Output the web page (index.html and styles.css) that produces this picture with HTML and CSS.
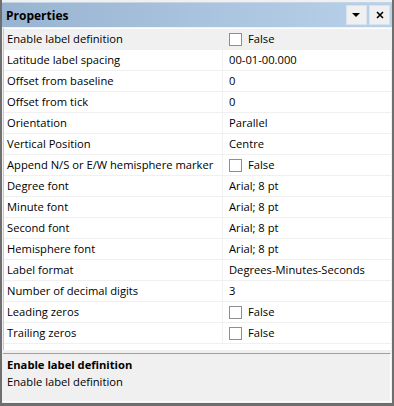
FILE: index.html
```html
<!DOCTYPE html>
<html lang="en">
<head>
  <meta charset="UTF-8">
  <title>Properties</title>
  <link rel="stylesheet" href="styles.css">
</head>
<body>
  <div class="panel">
    <div class="title-bar">
      <span class="title">Properties</span>
      <div class="title-buttons">
        <button class="tb-btn">
          <svg width="9" height="5" viewBox="0 0 9 5"><path d="M0 0H8L4 4Z" fill="#000"/></svg>
        </button>
        <button class="tb-btn">
          <svg width="8" height="8" viewBox="0 0 8 8"><path d="M1 1L7 7M7 1L1 7" stroke="#000" stroke-width="1.6"/></svg>
        </button>
      </div>
    </div>
    <div class="grid">
      <div class="row selected">
        <div class="name">Enable label definition</div>
        <div class="value"><span class="check"></span>False</div>
      </div>
      <div class="row">
        <div class="name">Latitude label spacing</div>
        <div class="value">00-01-00.000</div>
      </div>
      <div class="row">
        <div class="name">Offset from baseline</div>
        <div class="value">0</div>
      </div>
      <div class="row">
        <div class="name">Offset from tick</div>
        <div class="value">0</div>
      </div>
      <div class="row">
        <div class="name">Orientation</div>
        <div class="value">Parallel</div>
      </div>
      <div class="row">
        <div class="name">Vertical Position</div>
        <div class="value">Centre</div>
      </div>
      <div class="row">
        <div class="name">Append N/S or E/W hemisphere marker</div>
        <div class="value"><span class="check"></span>False</div>
      </div>
      <div class="row">
        <div class="name">Degree font</div>
        <div class="value">Arial; 8 pt</div>
      </div>
      <div class="row">
        <div class="name">Minute font</div>
        <div class="value">Arial; 8 pt</div>
      </div>
      <div class="row">
        <div class="name">Second font</div>
        <div class="value">Arial; 8 pt</div>
      </div>
      <div class="row">
        <div class="name">Hemisphere font</div>
        <div class="value">Arial; 8 pt</div>
      </div>
      <div class="row">
        <div class="name">Label format</div>
        <div class="value">Degrees-Minutes-Seconds</div>
      </div>
      <div class="row">
        <div class="name">Number of decimal digits</div>
        <div class="value">3</div>
      </div>
      <div class="row">
        <div class="name">Leading zeros</div>
        <div class="value"><span class="check"></span>False</div>
      </div>
      <div class="row">
        <div class="name">Trailing zeros</div>
        <div class="value"><span class="check"></span>False</div>
      </div>
    </div>
    <div class="desc">
      <div class="desc-title">Enable label definition</div>
      <div class="desc-text">Enable label definition</div>
    </div>
  </div>
</body>
</html>
```

FILE: styles.css
```css
body, html {
  margin: 0;
  height: 100%;
  font-family: "Open Sans", "Noto Sans", sans-serif;
  font-size: 11.2px;
}
.panel {
  width: 394px;
  height: 406px;
  box-sizing: border-box;
  border-left: 2px solid #6f6f6f;
  border-right: 2px solid #6f6f6f;
  border-bottom: 3px solid #6f6f6f;
  background: #f0f0f0;
  padding-top: 2px;
  display: flex;
  flex-direction: column;
}
.title-bar {
  height: 24px;
  display: flex;
  align-items: center;
  justify-content: space-between;
  background: linear-gradient(to right, #99b4d1, #b9d1ea);
  border-top: 1px solid #c4d5e8;
  padding-left: 4px;
}
.title {
  font-weight: bold;
  font-size: 12px;
  color: #000;
}
.title-buttons {
  display: flex;
  gap: 2px;
  padding-right: 2px;
}
.tb-btn {
  width: 21px;
  height: 20px;
  padding: 0;
  border: 1px solid #d9e3ee;
  background: #f0f0f0;
  display: flex;
  align-items: center;
  justify-content: center;
}
.grid {
  margin: 1px 1px 0 1px;
  border-left: 1px solid #c8c8c8;
  background: #fff;
  height: 322px;
  padding-top: 1px;
  box-sizing: border-box;
}
.row {
  display: flex;
  height: 21px;
  box-sizing: border-box;
  border-bottom: 1px solid #f0f0f0;
  color: #000;
}
.row.selected {
  background: #f0f0f0;
}
.name {
  width: 219px;
  box-sizing: border-box;
  padding-left: 3px;
  border-right: 1px solid #f0f0f0;
  line-height: 20px;
  white-space: nowrap;
  overflow: hidden;
}
.value {
  flex: 1;
  padding-left: 6px;
  line-height: 20px;
  display: flex;
  align-items: center;
}
.check {
  width: 11px;
  height: 11px;
  border: 1px solid #8e8e8e;
  background: #fff;
  margin-right: 6px;
}
.desc {
  flex: 1;
  margin: 3px 1px 1px 1px;
  border-top: 1px solid #a0a0a0;
  border-right: 1px solid #fff;
  border-bottom: 1px solid #fff;
  padding: 2px 0 0 4px;
}
.desc-title {
  font-weight: bold;
  line-height: 17px;
}
.desc-text {
  line-height: 17px;
}
```
